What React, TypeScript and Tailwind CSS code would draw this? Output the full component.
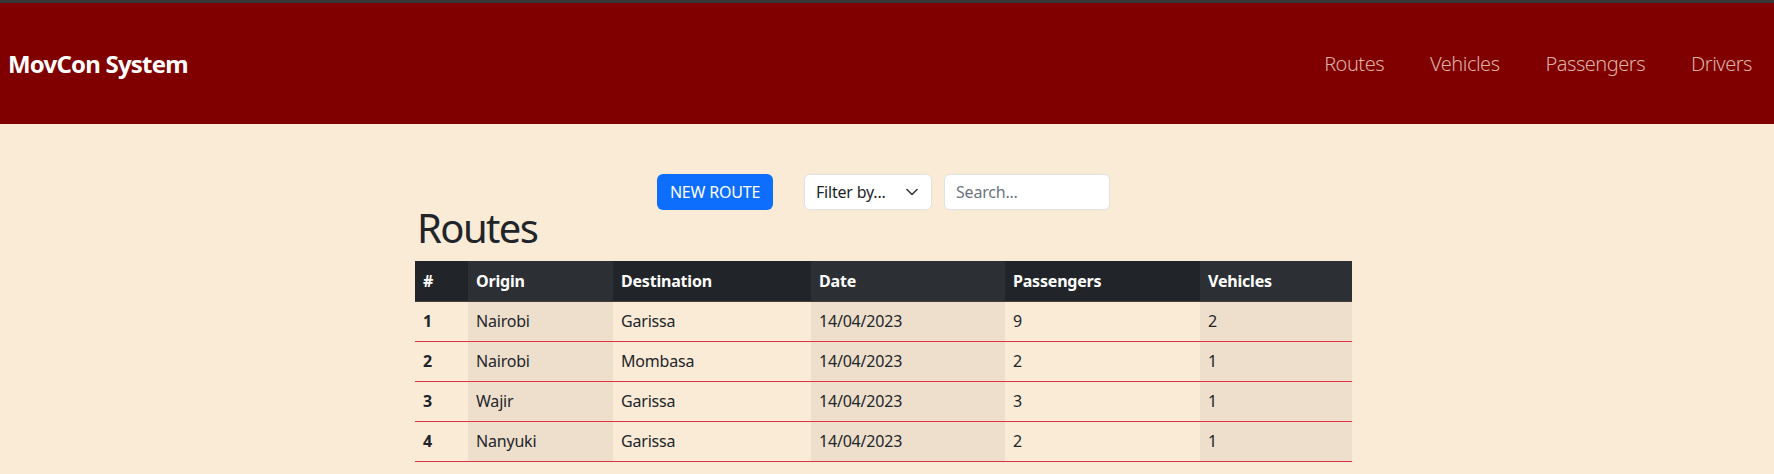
import React from "react";

const columns = ["#", "Origin", "Destination", "Date", "Passengers", "Vehicles"];

const widths = ["w-[53px]", "w-[145px]", "w-[198px]", "w-[194px]", "w-[195px]", "w-[152px]"];

const routes = [
  { id: 1, origin: "Nairobi", destination: "Garissa", date: "14/04/2023", passengers: 9, vehicles: 2 },
  { id: 2, origin: "Nairobi", destination: "Mombasa", date: "14/04/2023", passengers: 2, vehicles: 1 },
  { id: 3, origin: "Wajir", destination: "Garissa", date: "14/04/2023", passengers: 3, vehicles: 1 },
  { id: 4, origin: "Nanyuki", destination: "Garissa", date: "14/04/2023", passengers: 2, vehicles: 1 },
];

const navLinks = ["Routes", "Vehicles", "Passengers", "Drivers"];

const App = () => {
  return (
    <div className="min-h-screen bg-[#faebd7] font-['Noto_Sans',sans-serif] text-[#212529]">
      <div className="h-[3px] bg-[#383838]" />
      <header className="flex h-[121px] items-center justify-between bg-[#800000] pl-[8px] pr-[22px]">
        <span className="text-[24px] font-bold tracking-[-0.8px] text-white">MovCon System</span>
        <nav className="flex gap-[46px]">
          {navLinks.map((link) => (
            <a key={link} href="#" className="text-[20px] font-light tracking-[-0.5px] text-[#dcb0a8]">
              {link}
            </a>
          ))}
        </nav>
      </header>

      <main className="ml-[415px] w-[937px] pt-[50px]">
        <div className="flex justify-center">
          <button className="h-[36px] w-[116px] rounded-[6px] bg-[#0d6efd] text-[16px] tracking-[-0.2px] text-white">
            NEW ROUTE
          </button>
          <div className="ml-[31px] flex h-[36px] w-[128px] items-center justify-between rounded-[6px] border border-[#dee2e6] bg-white pl-[11px] pr-[13px] text-[16px] tracking-[-0.2px]">
            <span>Filter by...</span>
            <svg width="12" height="8" viewBox="0 0 12 8" fill="none">
              <path d="M1 1.5l5 5 5-5" stroke="#343a40" strokeWidth="1.6" strokeLinecap="round" strokeLinejoin="round" />
            </svg>
          </div>
          <input
            placeholder="Search..."
            className="ml-[12px] h-[36px] w-[166px] rounded-[6px] border border-[#dee2e6] bg-white px-[11px] text-[16px] tracking-[-0.2px] placeholder:text-[#6c757d]"
          />
        </div>

        <h1 className="-mt-[2px] mb-[13px] pl-[2px] text-[40px] leading-[40px] font-normal tracking-[-1.6px]">Routes</h1>

        <table className="w-[937px] table-fixed border-collapse text-left text-[16px] tracking-[-0.2px]">
          <thead>
            <tr className="border-b border-[#44403b]">
              {columns.map((col, i) => (
                <th
                  key={col}
                  className={`${widths[i]} h-[40px] px-[8px] font-bold text-white ${
                    i % 2 === 0 ? "bg-[#212529]" : "bg-[#2c3034]"
                  }`}
                >
                  {col}
                </th>
              ))}
            </tr>
          </thead>
          <tbody>
            {routes.map((r) => (
              <tr key={r.id} className="border-b border-[#dc3545]">
                <th className="h-[40px] px-[8px] font-bold">{r.id}</th>
                <td className="bg-[#eedfcc] px-[8px]">{r.origin}</td>
                <td className="px-[8px]">{r.destination}</td>
                <td className="bg-[#eedfcc] px-[8px]">{r.date}</td>
                <td className="px-[8px]">{r.passengers}</td>
                <td className="bg-[#eedfcc] px-[8px]">{r.vehicles}</td>
              </tr>
            ))}
          </tbody>
        </table>
      </main>
    </div>
  );
};

export default App;
